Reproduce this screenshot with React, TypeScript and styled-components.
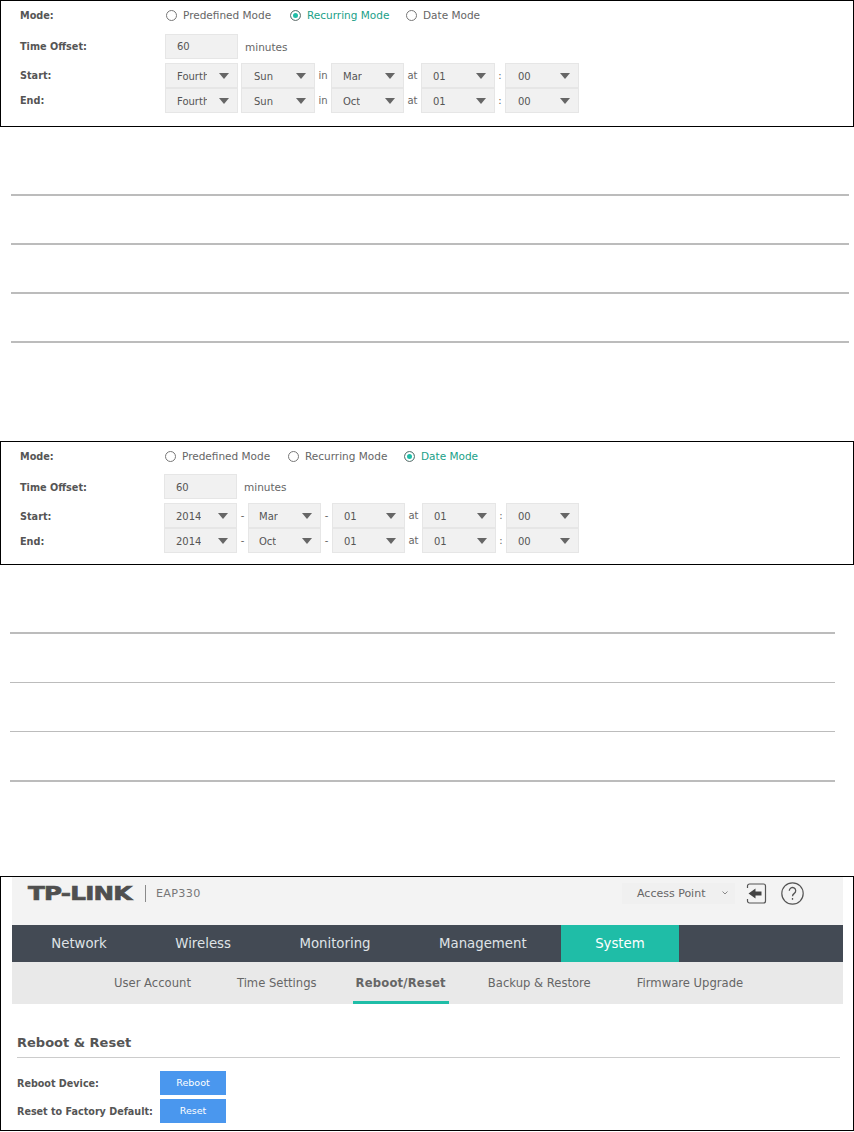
import React from "react";
import styled, { createGlobalStyle } from "styled-components";

const Global = createGlobalStyle`
  html, body { margin: 0; padding: 0; background: #fff; }
  body { font-family: "DejaVu Sans", Verdana, sans-serif; color: #555; }
`;

const Page = styled.div`
  width: 854px;
  height: 1132px;
  overflow: hidden;
`;

const Panel = styled.section<{ $top: number; $pad: number; $left: number; $shift?: number }>`
  box-sizing: border-box;
  margin-top: ${(p) => p.$top}px;
  width: 854px;
  border: 1px solid #000;
  padding: 0 0 ${(p) => p.$pad}px 19px;
  --label-col: ${(p) => p.$left}px;
  --text-shift: ${(p) => p.$shift ?? 0}px;
`;

const AppPanel = styled(Panel)`
  padding-left: 0;
`;

const Row = styled.div<{ $h?: number; $gap?: number }>`
  display: flex;
  align-items: center;
  height: ${(p) => p.$h ?? 25}px;
  margin-bottom: ${(p) => p.$gap ?? 0}px;
`;

const Label = styled.div<{ $flat?: boolean }>`
  box-sizing: border-box;
  width: var(--label-col);
  flex: none;
  padding-top: ${(p) => (p.$flat ? "0" : "var(--text-shift)")};
  font-size: 9.7px;
  font-weight: 700;
  color: #555;
`;

const RadioGroup = styled.div`
  display: flex;
  padding-left: 1px;
`;

const RadioItem = styled.div<{ $w: number; $on?: boolean }>`
  display: flex;
  align-items: center;
  gap: 6px;
  width: ${(p) => p.$w}px;
  font-size: 10.5px;
  color: ${(p) => (p.$on ? "#1a9f88" : "#666")};
`;

const RadioDot = styled.span<{ $on?: boolean }>`
  box-sizing: border-box;
  width: 11px;
  height: 11px;
  flex: none;
  border-radius: 50%;
  border: 1px solid #777;
  background: ${(p) => (p.$on ? "#1fbda7" : "#fff")};
  box-shadow: ${(p) => (p.$on ? "inset 0 0 0 2px #fff" : "none")};
`;

const OffsetInput = styled.div`
  box-sizing: border-box;
  width: 73px;
  height: 25px;
  padding: calc(var(--text-shift) / 2) 0 0 11px;
  background: #f1f1f1;
  border: 1px solid #e6e6e6;
  font-size: 10px;
  line-height: 23px;
  color: #555;
`;

const Unit = styled.span`
  margin-left: 7px;
  font-size: 10.5px;
  color: #666;
`;

const Select = styled.div<{ $w: number }>`
  box-sizing: border-box;
  position: relative;
  width: ${(p) => p.$w}px;
  height: 25px;
  background: #f1f1f1;
  border: 1px solid #e6e6e6;
  font-size: 10px;
  line-height: 25px;
  color: #555;
`;

const SelectText = styled.span<{ $clip?: boolean; $x: number }>`
  position: absolute;
  left: ${(p) => p.$x}px;
  width: ${(p) => (p.$clip ? "30px" : "auto")};
  overflow: hidden;
  white-space: nowrap;
`;

const Caret = styled.i`
  position: absolute;
  right: 8px;
  top: 9px;
  width: 0;
  height: 0;
  border-left: 5px solid transparent;
  border-right: 5px solid transparent;
  border-top: 6px solid #666;
`;

const Sep = styled.span<{ $w: number }>`
  width: ${(p) => p.$w}px;
  flex: none;
  text-align: center;
  font-size: 10px;
  color: #666;
`;

const Rules = styled.div<{ $top: number; $left: number; $w: number }>`
  margin: ${(p) => p.$top}px 0 0 ${(p) => p.$left}px;
  width: ${(p) => p.$w}px;
`;

const Rule = styled.hr<{ $t?: number; $before?: number }>`
  margin: ${(p) => p.$before ?? 47}px 0 0;
  border: 0;
  height: ${(p) => p.$t ?? 2}px;
  background: #bcbcbc;
`;

const App3 = styled.div`
  margin: 0 0 0 11px;
  width: 831px;
`;

const TopBar = styled.header`
  display: flex;
  align-items: center;
  height: 48px;
  padding: 0 39px 0 16px;
  background: #f3f3f3;
`;

const TopInner = styled.div`
  display: flex;
  align-items: center;
  width: 100%;
  height: 30px;
  margin-bottom: 16px;
`;

const Logo = styled.span`
  display: inline-block;
  width: 106px;
  padding-top: 1px;
  font-family: "DejaVu Sans", sans-serif;
  font-weight: 700;
  font-size: 19.5px;
  letter-spacing: -0.6px;
  line-height: 20px;
  color: #4f4f4f;
  -webkit-text-stroke: 0.7px #4f4f4f;
  white-space: nowrap;
  transform: scaleX(1.26);
  transform-origin: left center;
`;

const LogoDivider = styled.span`
  width: 1px;
  height: 17px;
  margin: 0 10px 0 11px;
  background: #8a8a8a;
`;

const Model = styled.span`
  font-size: 11.2px;
  letter-spacing: 0.3px;
  color: #777;
`;

const ModeBox = styled.div`
  display: flex;
  align-items: center;
  justify-content: space-between;
  box-sizing: border-box;
  width: 113px;
  height: 21px;
  margin-left: auto;
  padding: 0 6px 0 15px;
  background: #f0f0f0;
  font-size: 11px;
  color: #666;
`;

const IconButton = styled.span<{ $ml: number }>`
  display: flex;
  margin-left: ${(p) => p.$ml}px;
`;

const Nav = styled.nav`
  display: flex;
  height: 37px;
  padding-left: 5px;
  background: #434a54;
`;

const NavItem = styled.div<{ $on?: boolean }>`
  padding: 0 34.25px;
  line-height: 37px;
  font-size: 13.3px;
  color: ${(p) => (p.$on ? "#fff" : "#dfe3e6")};
  background: ${(p) => (p.$on ? "#1fbda7" : "transparent")};
`;

const SubNav = styled.div`
  display: flex;
  height: 42px;
  padding-left: 79px;
  background: #e9e9e9;
`;

const SubItem = styled.div<{ $on?: boolean }>`
  box-sizing: border-box;
  height: 42px;
  padding: 0 ${(p) => (p.$on ? 3 : 23)}px;
  margin: ${(p) => (p.$on ? "0 16px 0 13px" : "0")};
  line-height: 43px;
  font-size: 11.6px;
  font-weight: ${(p) => (p.$on ? 700 : 400)};
  letter-spacing: ${(p) => (p.$on ? "0.2px" : "0")};
  color: #666;
  border-bottom: ${(p) => (p.$on ? "3px solid #1fbda7" : "0")};
`;

const Content = styled.div`
  padding: 29px 3px 0 5px;
`;

const Title = styled.h2`
  margin: 0;
  height: 24px;
  font-size: 13px;
  font-weight: 700;
  line-height: 20px;
  color: #555;
  border-bottom: 1px solid #ccc;
`;

const ActionRow = styled.div`
  display: flex;
  align-items: center;
  height: 24px;
  margin-top: 4px;
  &:first-of-type { margin-top: 13px; }
`;

const ActionLabel = styled.div`
  width: 143px;
  font-size: 9.6px;
  font-weight: 700;
  color: #555;
`;

const BlueButton = styled.button`
  width: 66px;
  height: 24px;
  padding: 0 0 2px;
  border: 0;
  background: #4a97ee;
  color: #fff;
  font: 9.5px "DejaVu Sans", sans-serif;
`;

type Sel = { t: string; w: number; clip?: boolean; x?: number };
const Controls = ({ items, seps }: { items: Sel[]; seps: { t: string; w: number }[] }) => (
  <>
    {items.map((s, i) => (
      <React.Fragment key={i}>
        <Select $w={s.w}>
          <SelectText $x={s.x ?? 11} $clip={s.clip}>{s.t}</SelectText>
          <Caret />
        </Select>
        {seps[i] && <Sep $w={seps[i].w}>{seps[i].t}</Sep>}
      </React.Fragment>
    ))}
  </>
);

const TimePanel = ({ active, top, pad, col, gap, shift, radios, start, end, seps }: {
  active: number; top: number; pad: number; col: number; gap: number; shift: number;
  radios: number[]; start: Sel[]; end: Sel[]; seps: { t: string; w: number }[];
}) => (
  <Panel $top={top} $pad={pad} $left={col} $shift={shift}>
    <Row $h={28} $gap={gap}>
      <Label $flat>Mode:</Label>
      <RadioGroup>
        {["Predefined Mode", "Recurring Mode", "Date Mode"].map((m, i) => (
          <RadioItem key={m} $w={radios[i]} $on={i === active}>
            <RadioDot $on={i === active} />
            {m}
          </RadioItem>
        ))}
      </RadioGroup>
    </Row>
    <Row $gap={4}>
      <Label>Time Offset:</Label>
      <OffsetInput>60</OffsetInput>
      <Unit>minutes</Unit>
    </Row>
    <Row>
      <Label>Start:</Label>
      <Controls items={start} seps={seps} />
    </Row>
    <Row>
      <Label>End:</Label>
      <Controls items={end} seps={seps} />
    </Row>
  </Panel>
);

const recur = (m: string): Sel[] => [
  { t: "Fourth", w: 73, clip: true },
  { t: "Sun", w: 74, x: 12 },
  { t: m, w: 73, x: 11 },
  { t: "01", w: 74, x: 11 },
  { t: "00", w: 74, x: 12 },
];
const date = (m: string): Sel[] => [
  { t: "2014", w: 73 },
  { t: m, w: 73, x: 10 },
  { t: "01", w: 73, x: 11 },
  { t: "01", w: 74, x: 11 },
  { t: "00", w: 73, x: 11 },
];

export default function App() {
  return (
    <Page>
      <Global />
      <TimePanel
        active={1} top={0} pad={13} col={145} gap={5} shift={0}
        radios={[124, 116, 90]}
        start={recur("Mar")} end={recur("Oct")}
        seps={[{ t: "", w: 3 }, { t: "in", w: 16 }, { t: "at", w: 17 }, { t: ":", w: 10 }]}
      />
      <Rules $top={67} $left={11} $w={838}>
        <Rule $before={0} /><Rule /><Rule /><Rule />
      </Rules>
      <TimePanel
        active={2} top={98} pad={11} col={144} gap={4} shift={2}
        radios={[123, 116, 90]}
        start={date("Mar")} end={date("Oct")}
        seps={[{ t: "-", w: 11 }, { t: "-", w: 11 }, { t: "at", w: 17 }, { t: ":", w: 10 }]}
      />
      <Rules $top={67} $left={10} $w={825}>
        <Rule $before={0} />
        <Rule $t={1} $before={48} />
        <Rule $t={1} $before={48} />
        <Rule $before={48} />
      </Rules>
      <AppPanel $top={94} $pad={7} $left={0}>
        <App3>
          <TopBar>
            <TopInner>
              <Logo>TP-LINK</Logo>
              <LogoDivider />
              <Model>EAP330</Model>
              <ModeBox>
                Access Point
                <svg width="8" height="6" viewBox="0 0 8 6" fill="none" stroke="#888" strokeWidth="1">
                  <path d="M1.5 1.5 4 4l2.5-2.5" />
                </svg>
              </ModeBox>
              <IconButton $ml={11}>
                <svg width="21" height="21" viewBox="0 0 21 21" fill="none">
                  <path d="M1.5 5V3a2 2 0 0 1 2-2h14a2 2 0 0 1 2 2v15a2 2 0 0 1-2 2h-14a2 2 0 0 1-2-2v-2" stroke="#555" strokeWidth="1.2" />
                  <path d="M2.5 10.5 9.5 5.5v3h6v4h-6v3z" fill="#444" />
                </svg>
              </IconButton>
              <IconButton $ml={14}>
                <svg width="23" height="23" viewBox="0 0 23 23" fill="none" stroke="#555">
                  <circle cx="11.5" cy="11.5" r="10.7" strokeWidth="1.2" />
                  <path d="M8.3 8.8a3.2 3.2 0 1 1 5 2.6c-1.1.8-1.8 1.4-1.8 2.9" strokeWidth="1.3" />
                  <path d="M11.5 16v1.8" strokeWidth="1.3" />
                </svg>
              </IconButton>
            </TopInner>
          </TopBar>
          <Nav>
            <NavItem>Network</NavItem>
            <NavItem>Wireless</NavItem>
            <NavItem>Monitoring</NavItem>
            <NavItem>Management</NavItem>
            <NavItem $on>System</NavItem>
          </Nav>
          <SubNav>
            <SubItem>User Account</SubItem>
            <SubItem>Time Settings</SubItem>
            <SubItem $on>Reboot/Reset</SubItem>
            <SubItem>Backup &amp; Restore</SubItem>
            <SubItem>Firmware Upgrade</SubItem>
          </SubNav>
          <Content>
            <Title>Reboot &amp; Reset</Title>
            <ActionRow>
              <ActionLabel>Reboot Device:</ActionLabel>
              <BlueButton>Reboot</BlueButton>
            </ActionRow>
            <ActionRow>
              <ActionLabel>Reset to Factory Default:</ActionLabel>
              <BlueButton>Reset</BlueButton>
            </ActionRow>
          </Content>
        </App3>
      </AppPanel>
    </Page>
  );
}
